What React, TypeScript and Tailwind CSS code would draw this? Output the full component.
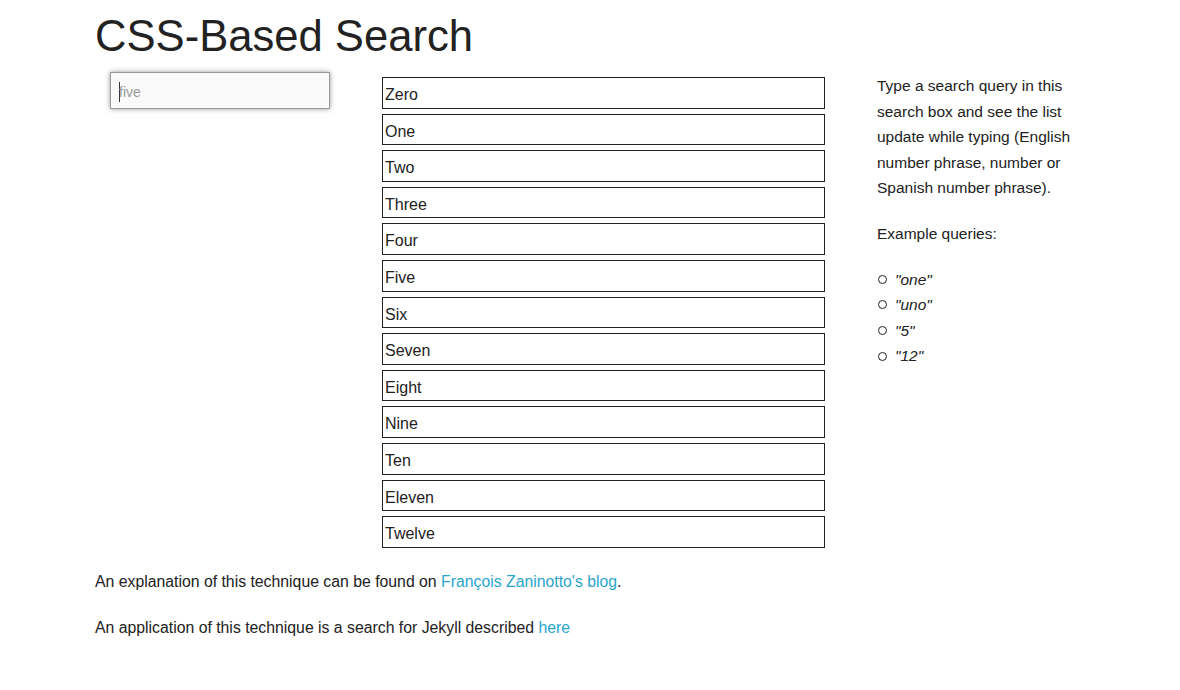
import React from "react";

const items = ["Zero","One","Two","Three","Four","Five","Six","Seven","Eight","Nine","Ten","Eleven","Twelve"];
const queries = ['"one"','"uno"','"5"','"12"'];

export default function App() {
  return (
    <div className="min-h-[690px] bg-white text-[#222222] pl-[95px] pt-[6px]" style={{ fontFamily: '"Liberation Sans", Arial, sans-serif' }}>
      <h1 className="text-[43.6px] leading-[61px] font-normal m-0">CSS-Based Search</h1>
      <div className="flex mt-[5px]">
        <div className="w-[287px] pl-[15px]">
          <div className="relative w-[220px] h-[37px] border border-[#999999] bg-[#fafafa] shadow-[0_0_5px_#999999] flex items-center pl-[8px]">
            <span className="w-px h-[20px] bg-[#333] mr-[-1px] mt-[2px]" />
            <span className="text-[14px] text-[#999999] mt-[3px]">five</span>
          </div>
        </div>
        <div className="w-[443px] mt-[5px] flex flex-col gap-[5px]">
          {items.map((t) => (
            <div key={t} className="border border-[#222222] h-[31.6px] pl-[2px] pt-[4px] text-[16px] leading-[25.6px] text-[#222222]">
              {t}
            </div>
          ))}
        </div>
        <div className="ml-[52px] w-[215px] text-[15.5px] leading-[25.6px] pt-[1px]">
          <p className="m-0">Type a search query in this search box and see the list update while typing (English number phrase, number or Spanish number phrase).</p>
          <p className="mt-[20px]">Example queries:</p>
          <ul className="mt-[20px]">
            {queries.map((q) => (
              <li key={q} className="flex items-center">
                <span className="inline-block w-[9px] h-[9px] rounded-full border border-[#222] mr-[8px] ml-[1px]" />
                <em>{q}</em>
              </li>
            ))}
          </ul>
        </div>
      </div>
      <p className="mt-[21px] text-[15.8px] leading-[25.6px]">
        An explanation of this technique can be found on <a className="text-[#2ba6cb]">François Zaninotto's blog</a>.
      </p>
      <p className="mt-[21px] text-[15.8px] leading-[25.6px]">
        An application of this technique is a search for Jekyll described <a className="text-[#2ba6cb]">here</a>
      </p>
    </div>
  );
}
